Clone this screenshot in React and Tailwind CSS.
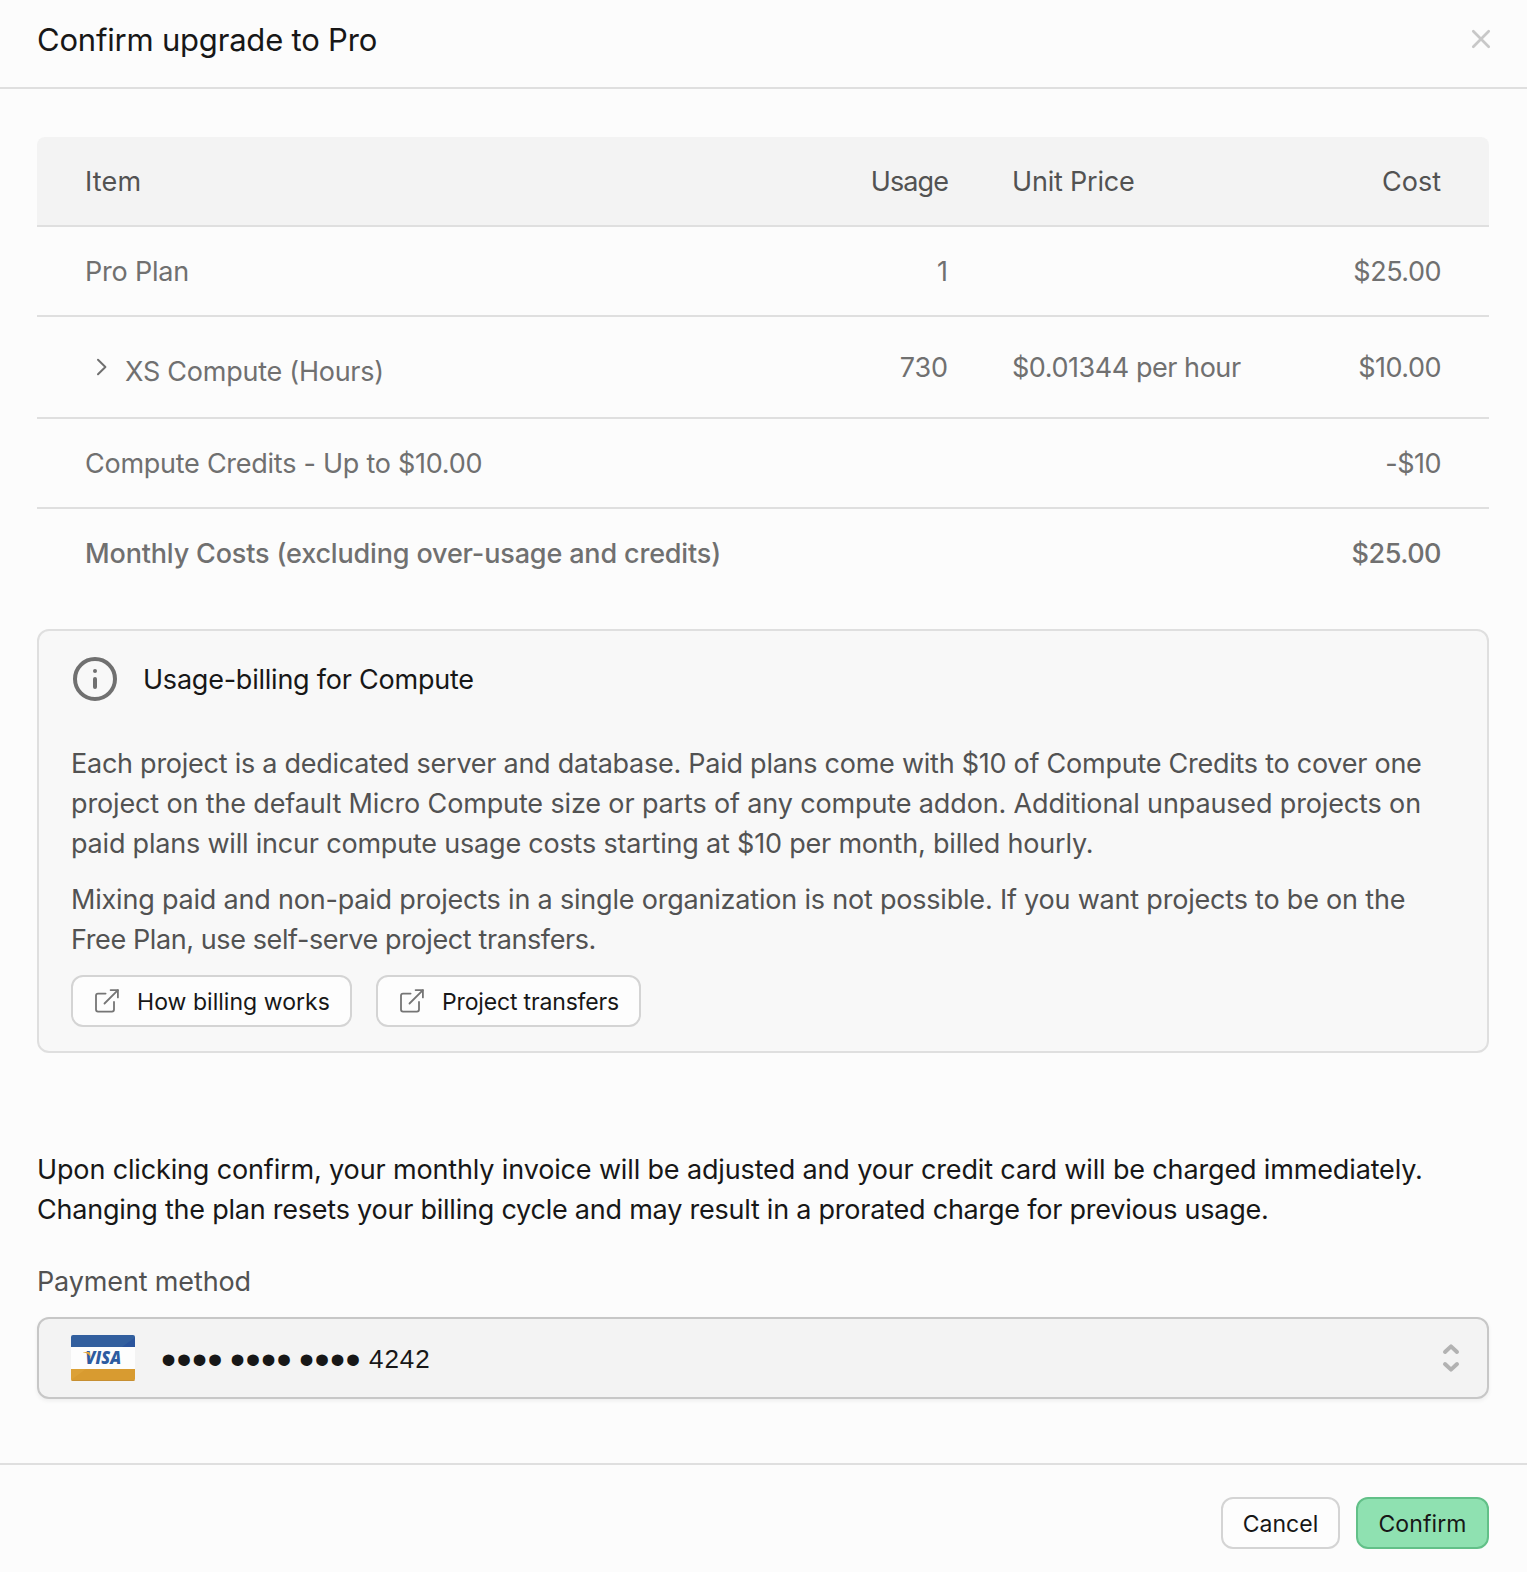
function CloseIcon() {
  return (
    <svg width="20" height="20" viewBox="0 0 20 20" fill="none" stroke="#c8c8c8" strokeWidth="2.7" strokeLinecap="round">
      <path d="M2.300 2.300l15.400 15.400M17.700 2.300L2.300 17.700" />
    </svg>
  );
}

function ChevronIcon() {
  return (
    <svg width="12" height="18" viewBox="0 0 12 18" fill="none" stroke="#707070" strokeWidth="2" strokeLinecap="round" strokeLinejoin="round">
      <path d="M2 1.800L9.400 9 2 16.200" />
    </svg>
  );
}

function InfoIcon() {
  return (
    <svg width="48" height="48" viewBox="0 0 48 48" fill="none" stroke="#707070" strokeWidth="4" strokeLinecap="round">
      <circle cx="24" cy="24" r="20" />
      <path d="M24 24v8" />
      <path d="M24 16h.02" />
    </svg>
  );
}

function ExternalIcon() {
  return (
    <svg width="28" height="28" viewBox="0 0 28 28" fill="none" stroke="#757575" strokeWidth="1.8" strokeLinecap="round" strokeLinejoin="round">
      <path d="M12.600 6.600H5A2 2 0 0 0 3 8.600V22.600a2 2 0 0 0 2 2h14a2 2 0 0 0 2-2V15" />
      <path d="M17.600 3.100h7.300v7.300" />
      <path d="M24.900 3.100L11.500 16.500" />
    </svg>
  );
}

function SelectorIcon() {
  return (
    <svg width="18" height="30" viewBox="0 0 18 30" fill="none" stroke="#b2b2b2" strokeWidth="4" strokeLinecap="round" strokeLinejoin="round">
      <path d="M3 9l6-5.600L15 9" />
      <path d="M3 21l6 5.600L15 21" />
    </svg>
  );
}

function VisaCard() {
  return (
    <svg width="64" height="46" viewBox="0 0 64 46">
      <defs>
        <clipPath id="card">
          <rect width="64" height="46" rx="2" />
        </clipPath>
      </defs>
      <g clipPath="url(#card)">
        <rect width="64" height="46" fill="#fdfdfd" />
        <rect width="64" height="12" fill="#325f9e" />
        <path d="M64 2.500V12H51z" fill="#2a549c" />
        <rect y="34" width="64" height="12" fill="#d89b30" />
        <path d="M0 34h15L0 45z" fill="#dca136" />
        <rect y="45" width="64" height="1" fill="#c68f32" />
      </g>
      <text x="14.6" y="29.2" fontFamily="Open Sans, sans-serif" fontSize="16.8" fontWeight="800" fontStyle="italic" fill="#2d5ba0" textLength="35.5" lengthAdjust="spacingAndGlyphs">
        VISA
      </text>
      <path d="M12 17h5.200c1 0 1.600.4 1.800 1.400l.9 4.400C18.700 19.800 16 17.900 12 17.300z" fill="#e8a83a" />
    </svg>
  );
}

function Row({ item, usage, price, cost, tall, last, bold }) {
  return (
    <tr className={bold ? "font-medium" : ""}>
      <td className={`pt-[2px] pl-12 ${tall ? "h-[102px]" : last ? "h-[88px]" : "h-[90px]"} ${last ? "" : "border-b-2 border-[#dfdfdf]"}`}>{item}</td>
      <td className={`pt-[2px] pr-[33px] text-right tracking-[-0.1px] ${last ? "" : "border-b-2 border-[#dfdfdf]"}`}>{usage}</td>
      <td className={`pt-[2px] pl-[31px] tracking-[-0.45px] ${last ? "" : "border-b-2 border-[#dfdfdf]"}`}>{price}</td>
      <td className={`pt-[2px] pr-12 text-right tracking-[-0.5px] ${last ? "" : "border-b-2 border-[#dfdfdf]"}`}>{cost}</td>
    </tr>
  );
}

export default function App() {
  return (
    <div className="flex h-[1572px] w-[1527px] flex-col bg-[#fcfcfc] font-['Inter',sans-serif] text-[27px] leading-10 whitespace-nowrap text-[#171717]">
      <header className="flex h-[89px] shrink-0 items-center justify-between border-b-2 border-[#dfdfdf] pr-9 pb-[9px] pl-[37px]">
        <h2 className="pt-[2px] text-[31px] tracking-[-0.2px]">Confirm upgrade to Pro</h2>
        <button className="pb-[1px]"><CloseIcon /></button>
      </header>

      <main className="flex flex-col pr-[38px] pl-[37px] pt-12">
        <table className="w-[1452px] table-fixed border-separate border-spacing-0 text-[#707070]">
          <colgroup>
            <col className="w-[763px]" />
            <col className="w-[181px]" />
            <col className="w-[290px]" />
            <col />
          </colgroup>
          <thead>
            <tr className="text-left text-[#525252]">
              <th className="h-[90px] rounded-tl-lg border-b-2 border-[#dfdfdf] bg-[#f3f3f3] pt-[2px] pl-12 font-normal tracking-[0.2px]">Item</th>
              <th className="border-b-2 border-[#dfdfdf] bg-[#f3f3f3] pt-[2px] pr-[33px] text-right font-normal tracking-[-0.9px]">Usage</th>
              <th className="border-b-2 border-[#dfdfdf] bg-[#f3f3f3] pt-[2px] pl-[31px] font-normal tracking-[-0.2px]">Unit Price</th>
              <th className="rounded-tr-lg border-b-2 border-[#dfdfdf] bg-[#f3f3f3] pt-[2px] pr-12 text-right font-normal">Cost</th>
            </tr>
          </thead>
          <tbody>
            <Row item={<span className="tracking-[-0.2px]">Pro Plan</span>} usage="1" cost="$25.00" />
            <Row
              tall
              item={
                <div className="flex items-center gap-[17px] pl-[11px]">
                  <span className="pb-[2px]"><ChevronIcon /></span>
                  <span className="pt-2 tracking-[-0.25px]">XS Compute (Hours)</span>
                </div>
              }
              usage="730"
              price="$0.01344 per hour"
              cost="$10.00"
            />
            <Row item={<span className="tracking-[-0.26px]">Compute Credits - Up to $10.00</span>} cost="-$10" />
            <Row last bold item={<span className="tracking-[-0.16px]">Monthly Costs (excluding over-usage and credits)</span>} cost="$25.00" />
          </tbody>
        </table>

        <section className="mt-8 h-[424px] rounded-xl border-2 border-[#dfdfdf] bg-[#f8f8f8] px-8 pt-6">
          <div className="flex h-12 items-center gap-6">
            <InfoIcon />
            <h3 className="pt-[2px] tracking-[-0.23px]">Usage-billing for Compute</h3>
          </div>
          <div className="mt-[41px] text-[#525252]">
            <p>
              <span className="block tracking-[-0.255px]">Each project is a dedicated server and database. Paid plans come with $10 of Compute Credits to cover one</span>
              <span className="block tracking-[-0.14px]">project on the default Micro Compute size or parts of any compute addon. Additional unpaused projects on</span>
              <span className="block tracking-[-0.2px]">paid plans will incur compute usage costs starting at $10 per month, billed hourly.</span>
            </p>
            <p className="mt-4">
              <span className="block tracking-[-0.2px]">Mixing paid and non-paid projects in a single organization is not possible. If you want projects to be on the</span>
              <span className="block tracking-[-0.4px]">Free Plan, use self-serve project transfers.</span>
            </p>
          </div>
          <div className="mt-[15px] flex gap-6 text-[23px]">
            <button className="flex h-[52px] w-[281px] items-center gap-4 rounded-xl border-2 border-[#d4d4d4] bg-[#fdfdfd] pl-5">
              <ExternalIcon />
              <span className="pt-[2px] tracking-[0.04px]">How billing works</span>
            </button>
            <button className="flex h-[52px] w-[265px] items-center gap-4 rounded-xl border-2 border-[#d4d4d4] bg-[#fdfdfd] pl-5">
              <ExternalIcon />
              <span className="pt-[2px] tracking-[-0.16px]">Project transfers</span>
            </button>
          </div>
        </section>

        <p className="mt-[97px]">
          <span className="block tracking-[-0.145px]">Upon clicking confirm, your monthly invoice will be adjusted and your credit card will be charged immediately.</span>
          <span className="block tracking-[-0.23px]">Changing the plan resets your billing cycle and may result in a prorated charge for previous usage.</span>
        </p>

        <label className="mt-8 tracking-[-0.14px] text-[#525252]">Payment method</label>
        <button className="mt-[15px] flex h-[82px] items-center rounded-xl border-2 border-[#c7c7c7] bg-[#f3f3f3] pr-[27px] pl-8 shadow-[0_2px_4px_rgba(0,0,0,0.06)]">
          <VisaCard />
          <span className="ml-[26px] flex items-center font-['Liberation_Sans',sans-serif]">
            <span className="flex gap-[7px] pt-[2px] text-[43px] tracking-[0.45px]">
              <span>••••</span>
              <span>••••</span>
              <span>••••</span>
            </span>
            <span className="ml-2 pt-[1px] text-[26px] tracking-[0.9px]">4242</span>
          </span>
          <span className="ml-auto"><SelectorIcon /></span>
        </button>
      </main>

      <footer className="mt-auto flex h-[109px] shrink-0 justify-end gap-4 border-t-2 border-[#dfdfdf] pt-8 pr-[38px] text-[23px]">
        <button className="h-[52px] w-[119px] rounded-xl border-2 border-[#d4d4d4] bg-[#fdfdfd] pt-[2px]">Cancel</button>
        <button className="h-[52px] w-[133px] rounded-xl border-2 border-[#62c088] bg-[#8fe1b1] pt-[2px] tracking-[0.1px]">Confirm</button>
      </footer>
    </div>
  );
}
